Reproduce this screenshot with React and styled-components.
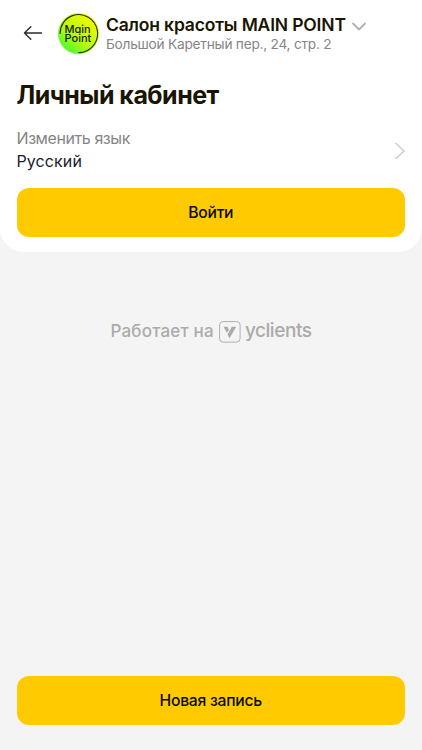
import React from 'react';
import styled, { createGlobalStyle } from 'styled-components';

const GlobalStyle = createGlobalStyle`
  *, *::before, *::after { box-sizing: border-box; }
  body { margin: 0; background: #f4f4f4; font-family: Inter, sans-serif; }
  h1, h2, p { margin: 0; }
`;

const Page = styled.div`
  display: flex;
  flex-direction: column;
  align-items: stretch;
  min-height: 100vh;
  background: #f4f4f4;
  white-space: nowrap;
`;

const Card = styled.section`
  height: 252px;
  padding: 12px 17px 0 16.5px;
  border-radius: 0 0 24px 24px;
  background: #fff;
`;

const Header = styled.header`
  display: flex;
  align-items: center;
  height: 42px;
`;

const IconButton = styled.button`
  display: flex;
  padding: 0;
  border: 0;
  background: none;
`;

const BackButton = styled(IconButton)`
  margin: 0 14.5px 0 6.5px;
`;

const Logo = styled.div`
  position: relative;
  display: flex;
  align-items: center;
  justify-content: center;
  flex: none;
  width: 41px;
  height: 41px;
  border-radius: 50%;
  background: linear-gradient(40deg, #38fb38 8%, #b4fa0c 42%, #f2fb02 85%);
`;

const LogoRing = styled.svg`
  position: absolute;
  inset: 0;
`;

const LogoText = styled.span`
  width: 27px;
  padding-top: 2px;
  font-size: 11px;
  line-height: 9px;
  font-weight: 500;
  font-feature-settings: 'cv11';
  color: #172300;
  white-space: pre-line;
`;

const Branch = styled.div`
  display: flex;
  flex-direction: column;
  margin-left: 7.5px;
`;

const BranchTitle = styled.h2`
  display: flex;
  align-items: center;
  gap: 6.5px;
  padding-top: 1px;
  font-size: 17.5px;
  line-height: 22px;
  font-weight: 600;
  letter-spacing: -0.17px;
  color: #1a1500;
`;

const TitleChevron = styled.svg`
  margin-top: 3px;
`;

const Address = styled.p`
  margin-top: -1px;
  font-size: 13.7px;
  line-height: 18px;
  letter-spacing: -0.24px;
  color: #858585;
`;

const Heading = styled.h1`
  margin-top: 25px;
  font-size: 25px;
  line-height: 32px;
  font-weight: 700;
  letter-spacing: -0.53px;
  color: #1a1500;
`;

const LanguageRow = styled.div`
  display: flex;
  align-items: center;
  justify-content: space-between;
  height: 46px;
  margin-top: 16px;
  margin-bottom: 14.5px;
`;

const Label = styled.p`
  font-size: 16px;
  line-height: 23px;
  letter-spacing: -0.42px;
  color: #858585;
`;

const Value = styled(Label)`
  letter-spacing: 0.1px;
  color: #20202a;
`;

const PrimaryButton = styled.button`
  display: block;
  width: 100%;
  height: 49px;
  padding: 0;
  border: 0;
  border-radius: 12px;
  background: #ffca00;
  color: #0c0a00;
  font: 500 15.7px/49px Inter, sans-serif;
  letter-spacing: -0.25px;
`;

const Powered = styled.div`
  display: flex;
  align-items: center;
  justify-content: center;
  height: 24px;
  margin-top: 66.5px;
  color: #ababab;
  font-size: 17px;
  line-height: 24px;
  font-weight: 500;
  letter-spacing: 0.2px;
`;

const BrandIcon = styled.svg`
  flex: none;
  margin: 3px 4px 0 5px;
`;

const Brand = styled.span`
  font-size: 19px;
  letter-spacing: -0.45px;
`;

const Footer = styled.footer`
  margin-top: auto;
  padding: 0 17px 25px 16.5px;
`;

export default function App() {
  return (
    <>
      <GlobalStyle />
      <Page>
        <Card>
          <Header>
            <BackButton aria-label="Назад">
              <svg width="20" height="16" viewBox="0 0 20 16" fill="none" stroke="#2b2a35" strokeWidth="1.4" strokeLinecap="round" strokeLinejoin="round">
                <path d="M18.5 8H1.5M7.8 1.7 1.5 8l6.3 6.3" />
              </svg>
            </BackButton>
            <Logo>
              <LogoRing width="41" height="41" viewBox="0 0 41 41" fill="none" stroke="#26350b" strokeWidth="1.15" strokeLinecap="round">
                <path d="M2.1 20.5A18.7 18.7 0 0 1 14.5 2.6A19 19 0 1 1 20.8 39.6" />
              </LogoRing>
              <LogoText>{'Main\nPoint'}</LogoText>
            </Logo>
            <Branch>
              <BranchTitle>
                Салон красоты MAIN POINT
                <TitleChevron width="14" height="9" viewBox="0 0 14 9" fill="none" stroke="#b0b0b0" strokeWidth="1.8" strokeLinecap="round" strokeLinejoin="round">
                  <path d="m1 1.5 6 6 6-6" />
                </TitleChevron>
              </BranchTitle>
              <Address>Большой Каретный пер., 24, стр. 2</Address>
            </Branch>
          </Header>
          <Heading>Личный кабинет</Heading>
          <LanguageRow>
            <div>
              <Label>Изменить язык</Label>
              <Value>Русский</Value>
            </div>
            <IconButton aria-label="Изменить язык">
              <svg width="10" height="17" viewBox="0 0 10 17" fill="none" stroke="#cfcfcf" strokeWidth="1.7" strokeLinecap="round" strokeLinejoin="round">
                <path d="m1 1.5 8 7.5-8 7.5" />
              </svg>
            </IconButton>
          </LanguageRow>
          <PrimaryButton>Войти</PrimaryButton>
        </Card>
        <Powered>
          Работает на
          <BrandIcon width="22" height="22" viewBox="0 0 22 22" fill="none">
            <rect x="0.6" y="0.6" width="20.5" height="20.5" rx="3.5" stroke="#b0b0b0" strokeWidth="1" />
            <path d="M4.5 5.7h4.2l1.2 3.2-2 2.9zM12.8 5.7h4.4l-6.6 11.6-2.1-3.7z" fill="#ababab" />
          </BrandIcon>
          <Brand>yclients</Brand>
        </Powered>
        <Footer>
          <PrimaryButton>Новая запись</PrimaryButton>
        </Footer>
      </Page>
    </>
  );
}
